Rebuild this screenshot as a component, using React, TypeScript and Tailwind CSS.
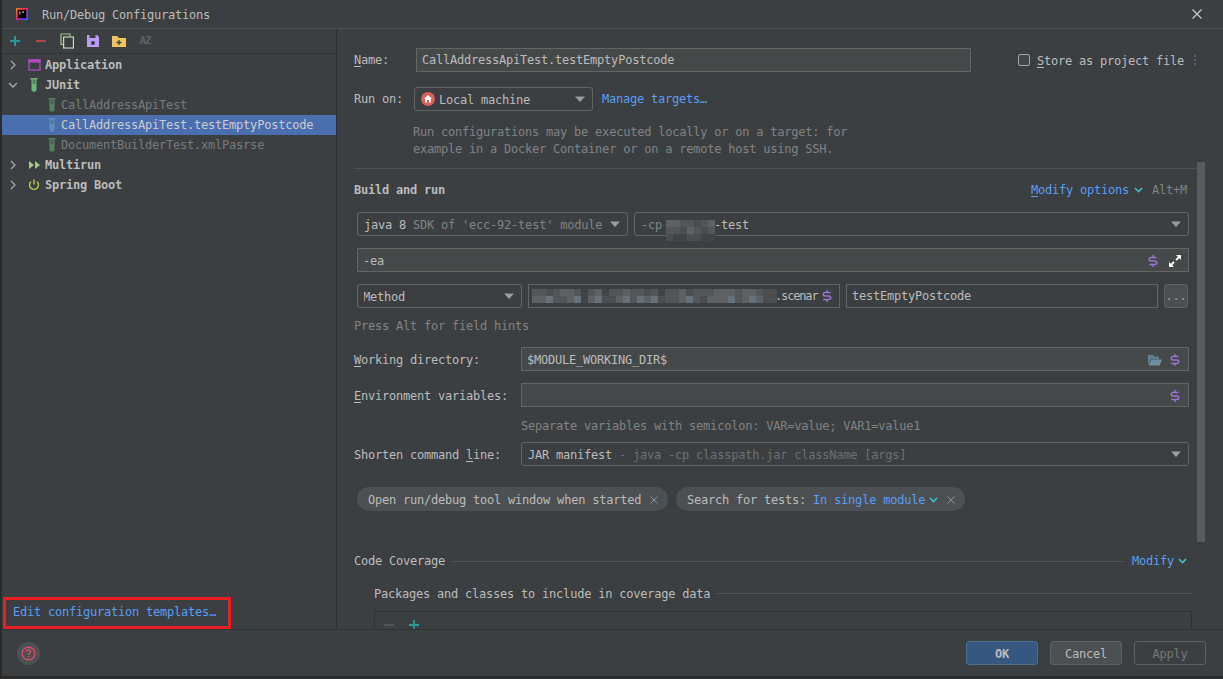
import React from "react";

const Blue = "text-[#589df6]";

function Dollar() {
  return (
    <svg width="10" height="14" viewBox="0 0 10 14" fill="none" stroke="#9876d0" strokeWidth="1.4">
      <path d="M8.5 3.5 H3.2 Q1.2 3.5 1.2 5.2 Q1.2 7 3.2 7 H6.8 Q8.8 7 8.8 8.8 Q8.8 10.5 6.8 10.5 H1.2" />
      <path d="M5 1 V3.5 M5 10.5 V13" />
    </svg>
  );
}
function Caret() {
  return (
    <svg width="12" height="7" viewBox="0 0 12 7" className="shrink-0"><path d="M1 0.5 H11 L6 6 Z" fill="#9a9d9e" /></svg>
  );
}
function Chev({ color = "#3fc1cd", size = 9 }: { color?: string; size?: number }) {
  return (
    <svg width={size} height="6" viewBox="0 0 9 6" fill="none" stroke={color} strokeWidth="1.6"><path d="M1 1 L4.5 4.5 L8 1" /></svg>
  );
}
function TreeArrow({ open }: { open?: boolean }) {
  return (
    <svg width="10" height="10" viewBox="0 0 10 10" fill="none" stroke="#a6a8aa" strokeWidth="1.3">
      {open ? <path d="M1 3 L5 7 L9 3" /> : <path d="M3 1 L7 5 L3 9" />}
    </svg>
  );
}
function Tube({ fill, dim }: { fill: string; dim?: boolean }) {
  return (
    <svg width="8" height="14" viewBox="0 0 8 14" style={{ opacity: dim ? 0.55 : 1 }}>
      <rect x="0.5" y="0" width="7" height="1.6" fill={fill} />
      <path d="M1.5 1.5 H6.5 V11.5 Q6.5 13.8 4 13.8 Q1.5 13.8 1.5 11.5 Z" fill={fill} />
      <rect x="2.6" y="2" width="2.8" height="4" fill="#3c3f41" opacity="0.45" />
    </svg>
  );
}
function X({ color = "#8e9092", size = 8 }: { color?: string; size?: number }) {
  return (
    <svg width={size} height={size} viewBox="0 0 8 8" fill="none" stroke={color} strokeWidth="1"><path d="M0.5 0.5 L7.5 7.5 M7.5 0.5 L0.5 7.5" /></svg>
  );
}

const SHADES = ["#414445", "#4a4e50", "#525658", "#5b6165", "#657078"];
function Mosaic({ rows, cell = 7 }: { rows: string[]; cell?: number }) {
  const w = rows[0].length * cell;
  const h = rows.length * cell;
  return (
    <svg width={w} height={h} className="block shrink-0">
      {rows.map((r, y) =>
        r.split("").map((c, x) => (
          <rect key={`${x}-${y}`} x={x * cell} y={y * cell} width={cell} height={cell} fill={SHADES[Number(c)]} />
        ))
      )}
    </svg>
  );
}

function Underlined({ c, rest }: { c: string; rest: string }) {
  return <span className="whitespace-nowrap"><span className="underline underline-offset-2">{c}</span>{rest}</span>;
}

function TreeRow({ arrow, open, icon, label, bold, selected, dim }: { arrow?: boolean; open?: boolean; icon: React.ReactNode; label: string; bold?: boolean; selected?: boolean; dim?: boolean }) {
  return (
    <div className={`h-[20px] flex items-center ${selected ? "bg-[#4b6eaf]" : ""}`}>
      <span className="w-[24px] pl-[6px] flex items-center shrink-0">{arrow ? <TreeArrow open={open} /> : null}</span>
      {!arrow && <span className="w-[18px] shrink-0" />}
      <span className="w-[16px] shrink-0 flex justify-center">{icon}</span>
      <span className={`${arrow ? "ml-[3px]" : "ml-[1px]"} ${bold ? "font-bold text-[#bbbbbb]" : dim ? "text-[#787a7c]" : "text-[#bbbbbb]"} ${selected ? "text-[#c9ccd0]" : ""}`}>{label}</span>
    </div>
  );
}

function Combo({ className, children, overlay }: { className: string; children: React.ReactNode; overlay?: React.ReactNode }) {
  return (
    <div className={`relative h-[24px] border border-[#646464] rounded-[3px] flex items-center pl-[6px] pr-[6px] ${className}`}>
      <span className="flex-1 min-w-0 whitespace-nowrap overflow-hidden flex items-center pt-[2px]">{children}</span>
      <Caret />
      {overlay}
    </div>
  );
}
function Field({ className, children }: { className: string; children?: React.ReactNode }) {
  return (
    <div className={`h-[24px] border border-[#646464] bg-[#45494a] flex items-center pl-[5px] pr-[8px] pt-[2px] ${className}`}>{children}</div>
  );
}

function ToolSlot({ children }: { children: React.ReactNode }) {
  return <span className="w-[26px] shrink-0 flex justify-center items-center">{children}</span>;
}

export default function App() {
  return (
    <div className="w-[1223px] h-[679px] bg-[#2b2b2b] overflow-hidden text-[12px] tracking-[-0.22px] text-[#bbbbbb] leading-[16px]" style={{ fontFamily: '"DejaVu Sans Mono", monospace' }}>
      <div className="ml-[2px] h-[676px] bg-[#3c3f41] flex flex-col relative">
        {/* title */}
        <div className="h-[29px] shrink-0 border-b border-[#515151] flex items-center">
          <svg width="12" height="12" viewBox="0 0 14 14" className="ml-[14px]">
            <defs><linearGradient id="ij" x1="0" y1="0" x2="1" y2="1"><stop offset="0" stopColor="#fc801d" /><stop offset="0.4" stopColor="#fe2857" /><stop offset="0.7" stopColor="#7b2ff7" /><stop offset="1" stopColor="#087cfa" /></linearGradient></defs>
            <rect width="14" height="14" fill="url(#ij)" />
            <rect x="2" y="2" width="10" height="10" fill="#000" />
            <rect x="4" y="4" width="1" height="3.5" fill="#fff" />
            <rect x="7.5" y="4" width="1.6" height="1.6" fill="#fff" />
          </svg>
          <span className="ml-[14px] pt-[2px] text-[#bbbbbb]">Run/Debug Configurations</span>
          <span className="ml-auto mr-[21px]"><svg width="10" height="10" viewBox="0 0 10 10" fill="none" stroke="#c9cbcd" strokeWidth="1.2"><path d="M0.5 0.5 L9.5 9.5 M9.5 0.5 L0.5 9.5" /></svg></span>
        </div>

        <div className="flex-1 flex min-h-0">
          {/* sidebar */}
          <div className="w-[335px] shrink-0 border-r border-[#323232] flex flex-col">
            <div className="h-[25px] shrink-0 border-b border-[#323232] flex items-center">
              <ToolSlot><svg width="12" height="12" viewBox="0 0 12 12" stroke="#299999" strokeWidth="2"><path d="M6 1 V11 M1 6 H11" /></svg></ToolSlot>
              <ToolSlot><svg width="12" height="12" viewBox="0 0 12 12" stroke="#a8474c" strokeWidth="2"><path d="M1 6 H11" /></svg></ToolSlot>
              <ToolSlot><svg width="15" height="16" viewBox="0 0 15 16" fill="none" stroke="#a4c984" strokeWidth="1.2"><path d="M3 11.5 H1 V1 H10 V3" /><rect x="3.6" y="4" width="9.8" height="11" stroke="#c5d4b4" /></svg></ToolSlot>
              <ToolSlot><svg width="14" height="14" viewBox="0 0 14 14"><path d="M1 1 H11 L13 3 V13 H1 Z" fill="#b99bf8" /><rect x="3.5" y="1" width="6" height="3" fill="#3c3f41" /><circle cx="7" cy="9" r="2" fill="#3c3f41" /></svg></ToolSlot>
              <ToolSlot><svg width="16" height="14" viewBox="0 0 16 14"><path d="M1 2 H6 L8 4 H15 V13 H1 Z" fill="#f0c560" /><path d="M8 6 V11 M5.5 8.5 H10.5" stroke="#3c3f41" strokeWidth="1.3" /></svg></ToolSlot>
              <ToolSlot><span className="text-[11px] tracking-[-1px] text-[#5c5f61] font-bold">AZ</span></ToolSlot>
            </div>
            <div className="pt-[1px]">
              <TreeRow arrow bold label="Application" icon={<svg width="13" height="12" viewBox="0 0 13 12" fill="none" stroke="#b24cc2" strokeWidth="1.2"><rect x="1" y="1" width="11" height="10" /><rect x="1" y="1" width="11" height="2" fill="#b24cc2" /></svg>} />
              <TreeRow arrow open bold label="JUnit" icon={<Tube fill="#6cb57a" />} />
              <TreeRow dim label="CallAddressApiTest" icon={<Tube fill="#6cb57a" dim />} />
              <TreeRow selected label="CallAddressApiTest.testEmptyPostcode" icon={<Tube fill="#6ea5c4" dim />} />
              <TreeRow dim label="DocumentBuilderTest.xmlPasrse" icon={<Tube fill="#6cb57a" dim />} />
              <TreeRow arrow bold label="Multirun" icon={<svg width="13" height="10" viewBox="0 0 13 10" fill="#a4c984"><path d="M1 1 L6 5 L1 9 Z M7 1 L12 5 L7 9 Z" /></svg>} />
              <TreeRow arrow bold label="Spring Boot" icon={<svg width="12" height="12" viewBox="0 0 12 12" fill="none" stroke="#b5c94c" strokeWidth="1.4"><path d="M3 2.5 A4.5 4.5 0 1 0 9 2.5 M6 0.5 V5.5" /></svg>} />
            </div>
            <div className="mt-auto pl-[1px]">
              <div className="w-[228px] h-[32px] border-[3px] border-[#ed1c24] flex items-center pl-[7px] pb-[3px] text-[#589df6]">Edit configuration templates…</div>
            </div>
          </div>

          {/* content */}
          <div className="flex-1 min-w-0 overflow-hidden pl-[17px] pr-[34px] relative">
            <div className="h-[24px] mt-[19px] flex items-center">
              <span className="w-[62px] shrink-0"><Underlined c="N" rest="ame:" /></span>
              <div className="w-[555px] shrink-0 h-[24px] border border-[#646464] bg-[#45494a] flex items-center pl-[5px]">CallAddressApiTest.testEmptyPostcode</div>
              <span className="ml-[47px] shrink-0 w-[12px] h-[12px] border border-[#a0a2a4] rounded-[2px] bg-[#43494a]" />
              <span className="ml-[7px] pt-[2px]"><Underlined c="S" rest="tore as project file" /></span>
              <span className="ml-[10px] shrink-0 flex flex-col gap-[2px]"><i className="w-[2px] h-[2px] bg-[#5d6062]" /><i className="w-[2px] h-[2px] bg-[#5d6062]" /><i className="w-[2px] h-[2px] bg-[#5d6062]" /></span>
            </div>
            <div className="h-[24px] mt-[15px] flex items-center">
              <span className="w-[60px] shrink-0">Run on:</span>
              <Combo className="w-[179px]">
                <svg width="14" height="14" viewBox="0 0 14 14" className="mr-[4px] -mt-[2px] shrink-0"><circle cx="7" cy="7" r="7" fill="#d9605f" /><path d="M7 3 L11 6.8 H9.8 V10.5 H8 V8 H6 V10.5 H4.2 V6.8 H3 Z" fill="#fff" /></svg>
                Local machine
              </Combo>
              <span className={`ml-[9px] ${Blue}`}>Manage targets…</span>
            </div>
            <div className="mt-[13px] ml-[59px] text-[#808284] leading-[17px]">
              Run configurations may be executed locally or on a target: for<br />example in a Docker Container or on a remote host using SSH.
            </div>
            <div className="mt-[10px] h-px bg-[#515151] mr-[-8px]" />
            <div className="mt-[13px] h-[16px] flex items-center">
              <span className="font-bold">Build and run</span>
              <span className={`ml-auto ${Blue}`}><Underlined c="M" rest="odify options" /></span>
              <span className="ml-[5px]"><Chev /></span>
              <span className="ml-[9px] mr-[2px] text-[#808284]">Alt+M</span>
            </div>
            <div className="mt-[14px] ml-[3px] flex gap-[6px]">
              <Combo className="w-[271px]">java 8&nbsp;<span className="text-[#808284]">SDK of 'ecc-92-test' module</span></Combo>
              <Combo
                className="flex-1"
                overlay={
                  <span className="absolute left-[31px] top-[7px]">
                    <Mosaic rows={["3322123", "2213212", "1001100"]} />
                  </span>
                }
              >
                <span className="text-[#808284]">-cp</span>
                <span className="w-[52px] shrink-0" />
                -test
              </Combo>
            </div>
            <Field className="mt-[12px] ml-[3px]">
              <span>-ea</span>
              <span className="ml-auto mr-[9px] -translate-x-px flex items-center"><Dollar /></span>
              <svg width="14" height="14" viewBox="0 0 14 14" fill="#fff" className="-mr-[2px]"><path d="M8 1 H13 V6 L11.2 4.2 L8.7 6.7 L7.4 5.4 L9.8 2.8 Z M6 13 H1 V8 L2.8 9.8 L5.4 7.3 L6.7 8.6 L4.2 11.2 Z" /></svg>
            </Field>
            <div className="mt-[12px] ml-[3px] flex">
              <Combo className="w-[165px]"><span className="-ml-[1px]">Method</span></Combo>
              <div className="ml-[6px] w-[312px] h-[24px] border border-[#646464] flex items-center pl-[3px] pr-[7px]">
                <Mosaic
                  rows={[
                    "2212332023022322120223122233323321".padEnd(35, "1"),
                    "3342234034113424341223421333423431".padEnd(35, "1"),
                  ]}
                />
                <span className="-ml-[2px] whitespace-nowrap tracking-[-1.15px]">.scenar</span>
                <span className="ml-auto"><Dollar /></span>
              </div>
              <div className="ml-[6px] w-[312px] h-[24px] border border-[#646464] flex items-center pl-[5px]">testEmptyPostcode</div>
              <div className="ml-[6px] w-[24px] h-[24px] border border-[#5e6060] rounded-[3px] bg-[#4c5052] flex items-center justify-center text-[#9a9c9e]">...</div>
            </div>
            <div className="mt-[10px] text-[#808284]">Press Alt for field hints</div>
            <div className="mt-[13px] h-[24px] flex items-center">
              <span className="w-[167px] shrink-0 pt-[2px]"><Underlined c="W" rest="orking directory:" /></span>
              <Field className="flex-1">
                $MODULE_WORKING_DIR$
                <svg width="15" height="12" viewBox="0 0 15 12" className="ml-auto mr-[8px]"><path d="M1 1 H6 L7.5 2.5 H12 V5 H4 L1 11 Z" fill="#5e7e91" /><path d="M4.5 5.5 H15 L12.5 11.5 H1.5 Z" fill="#6e8fa3" /></svg>
                <Dollar />
              </Field>
            </div>
            <div className="mt-[12px] h-[24px] flex items-center">
              <span className="w-[167px] shrink-0 pt-[2px]"><Underlined c="E" rest="nvironment variables:" /></span>
              <Field className="flex-1"><span className="ml-auto"><Dollar /></span></Field>
            </div>
            <div className="mt-[11px] ml-[167px] text-[#808284]">Separate variables with semicolon: VAR=value; VAR1=value1</div>
            <div className="mt-[8px] h-[24px] flex items-center">
              <span className="w-[167px] shrink-0 pt-[2px]">Shorten command <Underlined c="l" rest="ine:" /></span>
              <Combo className="flex-1"><span>JAR manifest</span><span className="text-[#6d6f71] ml-[7px]">- java -cp classpath.jar className [args]</span></Combo>
            </div>
            <div className="mt-[21px] ml-[3px] flex gap-[8px]">
              <div className="h-[24px] w-[311px] pt-[2px] rounded-full bg-[#4d5052] flex items-center pl-[11px]">
                Open run/debug tool window when started
                <span className="ml-[9px]"><X /></span>
              </div>
              <div className="h-[24px] w-[289px] pt-[2px] rounded-full bg-[#4d5052] flex items-center pl-[11px]">
                Search for tests:&nbsp;<span className={Blue}>In single module</span>
                <span className="ml-[4px]"><Chev /></span>
                <span className="ml-[9px]"><X /></span>
              </div>
            </div>
            <div className="mt-[42px] h-[16px] flex items-center">
              <span>Code Coverage</span>
              <span className="ml-[6px] flex-1 h-px bg-[#515151]" />
              <span className={`ml-[8px] ${Blue}`}>Modify</span>
              <span className="ml-[4px]"><Chev /></span>
              <span className="w-[2px]" />
            </div>
            <div className="mt-[16px] ml-[20px] mr-[-3px] h-[16px] flex items-center">
              <span className="translate-y-px">Packages and classes to include in coverage data</span>
              <span className="ml-[6px] flex-1 h-px bg-[#515151]" />
            </div>
            <div className="mt-[10px] ml-[20px] mr-[-3px] h-[40px] border border-[#323232] flex items-start pt-[6px] pl-[9px] gap-[15px]">
              <svg width="10" height="10" viewBox="0 0 10 10" stroke="#575a5c" strokeWidth="1.6" className="mt-[2px]"><path d="M0 5 H10" /></svg>
              <svg width="10" height="10" viewBox="0 0 10 10" stroke="#299999" strokeWidth="1.8" className="mt-[2px]"><path d="M5 0 V10 M0 5 H10" /></svg>
            </div>
            <div className="absolute left-[860px] top-[133px] w-[8px] h-[380px] bg-[#595b5d]" />
          </div>
        </div>

        {/* footer */}
        <div className="h-[47px] shrink-0 border-t border-[#323232] flex items-center relative">
          <span className="ml-[15px] w-[23px] h-[23px] rounded-full bg-[#4d5052] flex items-center justify-center">
            <svg width="15" height="15" viewBox="0 0 15 15" fill="none" stroke="#e0506c" strokeWidth="1.2"><circle cx="7.5" cy="7.5" r="6.4" /><path d="M5.4 5.7 Q5.4 3.8 7.5 3.8 Q9.6 3.8 9.6 5.6 Q9.6 6.7 8.4 7.3 Q7.5 7.8 7.5 8.9" /><path d="M7.5 10.2 V11.6" /></svg>
          </span>
          <div className="ml-auto mr-[17px] flex gap-[12px]">
            <div className="w-[72px] h-[24px] pt-[1px] rounded-[3px] border border-[#4c708c] bg-[#365880] flex items-center justify-center font-bold text-[#bbbbbb]">OK</div>
            <div className="w-[72px] h-[24px] pt-[2px] rounded-[3px] border border-[#5e6060] bg-[#4c5052] flex items-center justify-center">Cancel</div>
            <div className="w-[72px] h-[24px] pt-[2px] rounded-[3px] border border-[#5e6060] flex items-center justify-center text-[#777777]">Apply</div>
          </div>
        </div>
      </div>
    </div>
  );
}
